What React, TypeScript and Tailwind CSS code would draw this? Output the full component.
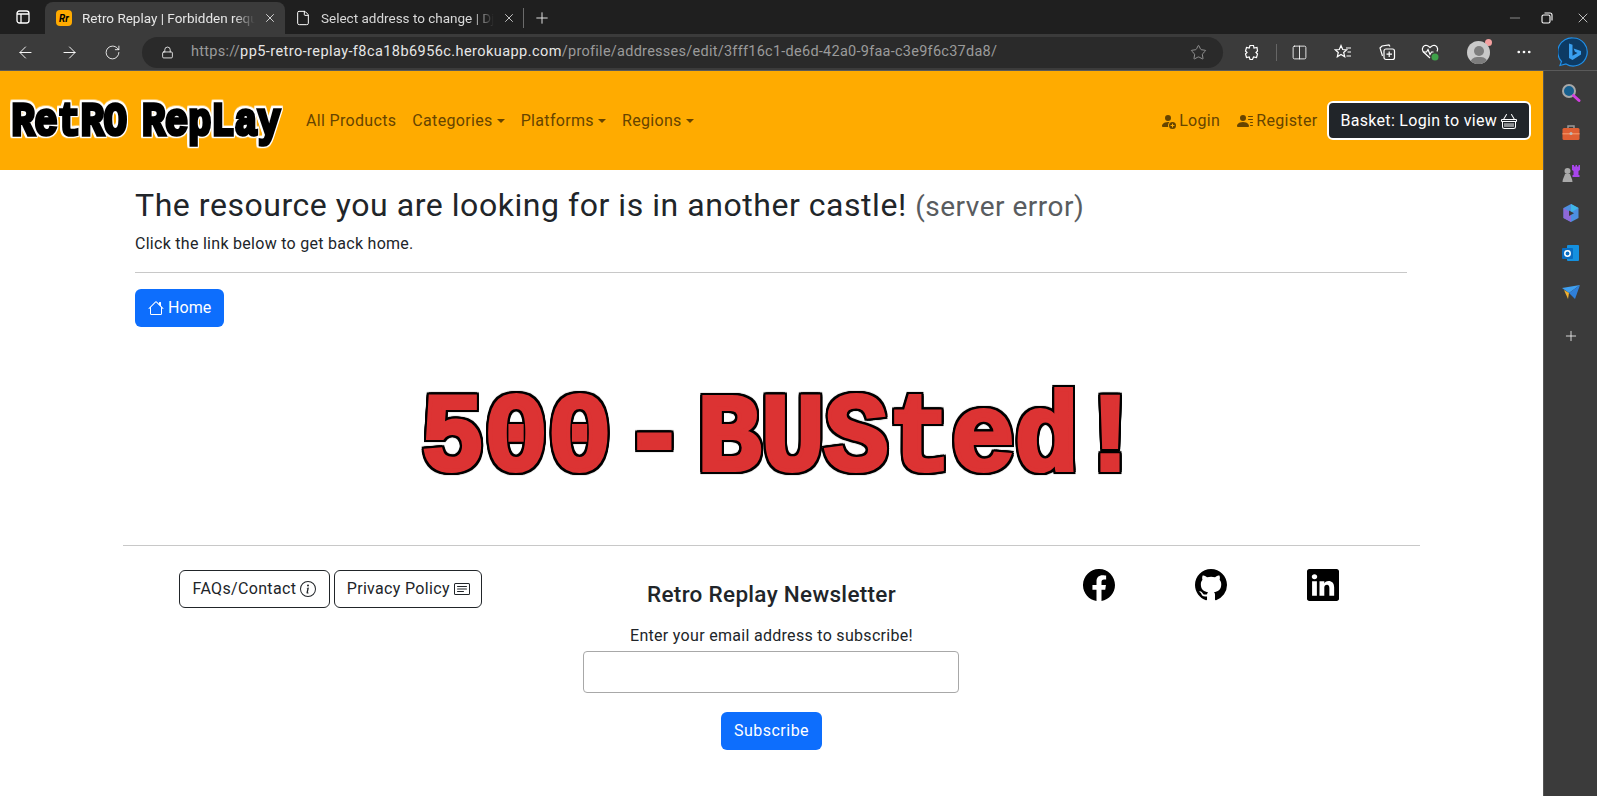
import React from 'react';
import { ArrowLeft, ArrowRight, RotateCw, Lock, Star, X, Plus, Minus, File, Columns2, MoreHorizontal } from 'lucide-react';
import { BsFacebook, BsGithub, BsLinkedin, BsHouse, BsInfoCircle, BsCardText, BsBasket, BsPersonFillAdd, BsPersonLinesFill } from 'react-icons/bs';

const body = "font-['Roboto','Liberation_Sans',sans-serif]";

function BrowserTabs() {
  return (
    <div className="h-[34px] bg-[#1f1f1f] flex items-end text-[#e6e6e6] text-[13.5px]">
      <div className="w-[45px] h-full flex items-center justify-center">
        <svg width="16" height="16" viewBox="0 0 16 16" fill="none" stroke="#fff" strokeWidth="1.3">
          <rect x="2" y="2" width="12" height="12" rx="2.5" />
          <path d="M2 5h12M6 5v9" />
        </svg>
      </div>
      <div className="w-[240px] h-[32px] bg-[#3b3b3b] rounded-t-lg flex items-center pl-[11px] pr-[8px] overflow-hidden">
        <span className="w-[16px] h-[16px] bg-[#ffab00] rounded-sm text-black text-[10px] italic font-bold flex items-center justify-center mr-[10px] shrink-0">Rr</span>
        <span className="flex-1 whitespace-nowrap overflow-hidden [mask-image:linear-gradient(90deg,#000_88%,transparent)]">Retro Replay | Forbidden requ</span>
        <X size={14} strokeWidth={1.5} className="ml-2 shrink-0" />
      </div>
      <div className="w-[238px] h-[32px] flex items-center pl-[10px] pr-[7px] overflow-hidden text-[#d8d8d8]">
        <File size={16} strokeWidth={1.5} className="mr-[10px] shrink-0 text-white" />
        <span className="flex-1 whitespace-nowrap overflow-hidden [mask-image:linear-gradient(90deg,#000_88%,transparent)]">Select address to change | Dja</span>
        <X size={14} strokeWidth={1.5} className="ml-2 shrink-0" />
      </div>
      <div className="h-[32px] flex items-center">
        <div className="w-px h-[20px] bg-[#6b6b6b]" />
        <Plus size={18} strokeWidth={1.3} className="ml-[9px]" />
      </div>
      <div className="ml-auto h-[32px] flex items-center gap-[18px] pr-[6px]">
        <Minus size={16} strokeWidth={1.3} className="text-[#9a9a9a]" />
        <svg width="12" height="12" viewBox="0 0 12 12" fill="none" stroke="#fff" strokeWidth="1.1">
          <rect x="1" y="3" width="8" height="8" rx="1.5" />
          <path d="M3.5 1h5.500a2 2 0 0 1 2 2v5.500" />
        </svg>
        <X size={16} strokeWidth={1.2} className="ml-[4px]" />
      </div>
    </div>
  );
}

function BrowserToolbar() {
  return (
    <div className="h-[37px] bg-[#3b3b3b] flex items-center text-white border-b border-[#5a5a5a]">
      <div className="w-[142px] flex items-center gap-[25px] pl-[16px] shrink-0">
        <ArrowLeft size={19} strokeWidth={1.2} />
        <ArrowRight size={19} strokeWidth={1.2} />
        <RotateCw size={17} strokeWidth={1.2} />
      </div>
      <div className="w-[1081px] h-[31px] rounded-full bg-[#2a2a2a] flex items-center pl-[19px] pr-[16px] shrink-0">
        <Lock size={13} strokeWidth={1.5} className="mr-[17px]" />
        <span className="text-[14.5px] tracking-[0.26px] text-[#9b9b9b] whitespace-nowrap">
          https://<span className="text-[#e6e6e6] tracking-[0.43px]">pp5-retro-replay-f8ca18b6956c.herokuapp.com</span>/profile/addresses/edit/3fff16c1-de6d-42a0-9faa-c3e9f6c37da8/
        </span>
        <Star size={17} strokeWidth={1.2} className="ml-auto text-[#a0a0a0]" />
      </div>
      <div className="flex-1 flex items-center pl-[20px] pr-[9px]">
        <svg width="18" height="18" viewBox="0 0 18 18" fill="none" stroke="#fff" strokeWidth="1.2">
          <path d="M7 2.500h3.500l.5 2.500 3-.5.5 3.500-1.500 1.500 1.500 1.500-1 3.500-3-.5-1 2.500H7l-.8-2.500-2.700.5L2.500 11l1.500-1.500L2.500 8l1-3.500 2.700.5z" />
        </svg>
        <div className="w-px h-[17px] bg-[#666] ml-[15px] mr-[14px]" />
        <Columns2 size={17} strokeWidth={1.2} />
        <svg width="18" height="18" viewBox="0 0 18 18" fill="none" stroke="#fff" strokeWidth="1.2" className="ml-[26px]">
          <path d="M7 2.500 8.700 6.500l4 .3-3 2.700 1 4.200L7 11.500l-3.700 2.200 1-4.200-3-2.700 4-.3z" />
          <path d="M12 5h5M13.500 9H17M12.500 13H17" />
        </svg>
        <svg width="18" height="18" viewBox="0 0 18 18" fill="none" stroke="#fff" strokeWidth="1.2" className="ml-[26px]">
          <rect x="6" y="6" width="10.500" height="10.500" rx="2" />
          <path d="M11.200 8.500v5.500M8.500 11.200h5.500M12 3.500l-1-1.500-7 1-2 2 2.500 8" />
        </svg>
        <svg width="20" height="20" viewBox="0 0 20 20" fill="none" className="ml-[24px]">
          <path d="M10 16 3 9.500C1 6 4 2.500 7 3.500 8.500 4 10 5.500 10 5.500S11.500 4 13 3.500c3-1 6 2.500 4 6" stroke="#fff" strokeWidth="1.200" />
          <path d="M3 10h3.500l1.500-2.500 2 5 1.500-2.500h2" stroke="#fff" strokeWidth="1.200" />
          <circle cx="15" cy="15" r="3.500" fill="#3fa14a" />
        </svg>
        <div className="relative w-[23px] h-[23px] rounded-full bg-[#c9c9c9] overflow-hidden ml-[27px] flex flex-col items-center justify-end">
          <div className="w-[10px] h-[10px] rounded-full bg-[#7d7d7d] mb-[1px]" />
          <div className="w-[18px] h-[7px] rounded-t-full bg-[#7d7d7d]" />
        </div>
        <span className="w-[7px] h-[7px] rounded-full bg-[#f4a0a0] -ml-[5px] -mt-[20px]" />
        <MoreHorizontal size={18} strokeWidth={1.6} className="ml-[23px]" />
        <svg width="30" height="30" viewBox="0 0 30 30" className="ml-auto">
          <path d="M15 1a14 14 0 1 1-7 26l-6 1.500 1.500-4A14 14 0 0 1 15 1z" fill="#0d3a63" stroke="#1f8fe8" strokeWidth="1.200" />
          <path d="M11 6.500l3.500 1.200v11l5-2.800-2.600-1.200-1.300-3.300 7.400 2.600v3.400L14.500 23 11 21z" fill="#3aa0f0" />
        </svg>
      </div>
    </div>
  );
}

function Navbar() {
  const linkClass = 'text-[#664400] text-[16px] tracking-[0.33px] whitespace-nowrap';
  return (
    <nav className="h-[99px] bg-[#ffab00] flex items-center pl-[10px] pr-[12px]">
      <div className="w-[272px] h-[50px] pt-[6px] flex items-center justify-center shrink-0">
        <span className="font-['Liberation_Mono',monospace] font-bold text-[38.5px] leading-none scale-y-[1.2] text-black whitespace-nowrap [word-spacing:-8px] [-webkit-text-stroke:3px_black] [filter:drop-shadow(1.5px_0_0_#fff)_drop-shadow(-1.5px_0_0_#fff)_drop-shadow(0_1.5px_0_#fff)_drop-shadow(0_-1.5px_0_#fff)]">
          RetRO RepLay
        </span>
      </div>
      <div className="flex items-center gap-[16px] ml-[24px]">
        <span className={linkClass}>All Products</span>
        {['Categories', 'Platforms', 'Regions'].map(label => (
          <span key={label} className={`${linkClass} flex items-center`}>
            {label}
            <span className="ml-[4px] border-t-[4px] border-x-[4px] border-x-transparent border-t-[#664400]" />
          </span>
        ))}
      </div>
      <div className="ml-auto flex items-center">
        <span className={`${linkClass} flex items-center gap-[3px]`}><BsPersonFillAdd size={16} /> Login</span>
        <span className={`${linkClass} flex items-center gap-[3px] ml-[17px]`}><BsPersonLinesFill size={16} /> Register</span>
        <span className="ml-[9px] h-[39px] px-[12px] flex items-center gap-[4px] bg-[#212529] text-white text-[16px] tracking-[0.3px] rounded-md border-2 border-white whitespace-nowrap">
          Basket: Login to view <BsBasket size={16} />
        </span>
      </div>
    </nav>
  );
}

function Sidebar() {
  return (
    <aside className="w-[54px] shrink-0 bg-[#3b3b3b] border-l border-[#555] flex flex-col items-center pt-[12px] gap-[20px] text-white">
      <svg width="20" height="20" viewBox="0 0 20 20"><circle cx="8" cy="8" r="6" fill="#17608f" stroke="#a8a8a8" strokeWidth="2" /><path d="M12.500 12.500 18 17.500" stroke="#d13fe0" strokeWidth="3" strokeLinecap="round" /></svg>
      <svg width="20" height="20" viewBox="0 0 20 20"><path d="M7 5V3h6v2" stroke="#999" strokeWidth="1.500" fill="none" /><rect x="1.500" y="5" width="17" height="12" rx="1.500" fill="#df5f33" /><rect x="1.500" y="10" width="17" height="1.500" fill="#f08a5c" /><circle cx="10" cy="10.500" r="1.500" fill="#bbb" /></svg>
      <svg width="20" height="20" viewBox="0 0 20 20"><circle cx="6.500" cy="8" r="3" fill="#a9a9a9" /><path d="M1.500 19c0-3 2-6 2.500-8h5c.5 2 2.500 5 2.500 8z" fill="#a9a9a9" /><path d="M11 2h2v1.500h1.500V2h1.500v1.500h1.500V2H19v5l-1.500 1v4h1v2h-7v-2h1V8L11 7z" fill="#a846ec" /></svg>
      <svg width="20" height="20" viewBox="0 0 20 20"><path d="M10 1 17.500 5v10L10 19l-7.500-4V5z" fill="#4d8fe0" /><path d="M2.500 5 10 9.500V19l-7.500-4z" fill="#8f68d8" /><path d="M10 1l7.500 4-7.500 4.500z" fill="#3fb6e8" /><path d="M8 7.500l5 2.800-5 2.700z" fill="#3b3b3b" /></svg>
      <svg width="20" height="20" viewBox="0 0 20 20"><rect x="6" y="2" width="12" height="16" rx="1" fill="#1490df" /><rect x="1" y="5" width="11" height="11" rx="1" fill="#0a6cc0" /><circle cx="6.500" cy="10.500" r="2.700" fill="none" stroke="#fff" strokeWidth="1.500" /></svg>
      <svg width="20" height="20" viewBox="0 0 20 20"><path d="M1 5 19 2 8 10z" fill="#3fa0f0" /><path d="M8 10 19 2l-5 14z" fill="#2f7fd8" /><path d="M3 7l5 3-1 6z" fill="#f0b030" /></svg>
      <Plus size={16} strokeWidth={1.2} className="mt-[5px]" />
    </aside>
  );
}

function ErrorContent() {
  return (
    <div className="mx-[135px] w-[1272px] pt-[16px]">
      <h1 className="text-[#212529] text-[32px] leading-[38px] tracking-[0.545px] whitespace-nowrap">
        The resource you are looking for is in another castle! <small className="text-[#595c5f] text-[28px] tracking-[0.5px]">(server error)</small>
      </h1>
      <p className="text-[#212529] text-[16px] leading-[24px] tracking-[0.28px] mt-[6px]">Click the link below to get back home.</p>
      <hr className="border-[#c8c8c8] mt-[16px]" />
      <button className="mt-[16px] h-[38px] px-[13px] bg-[#0d6efd] text-white text-[16px] tracking-[0.1px] rounded-md flex items-center gap-[4px]">
        <BsHouse size={16} /> Home
      </button>
      <div className="h-[218px] pt-[8px] pl-[20px] flex items-center justify-center">
        <span className="font-['Liberation_Mono',monospace] font-bold text-[107px] leading-none scale-y-[1.04] text-[#dc3333] whitespace-nowrap tracking-[-0.75px] [word-spacing:-52px] [-webkit-text-stroke:4px_#dc3333] [filter:drop-shadow(2px_0_0_#000)_drop-shadow(-2px_0_0_#000)_drop-shadow(0_2px_0_#000)_drop-shadow(0_-2px_0_#000)]">
          500 - BUSted!
        </span>
      </div>
    </div>
  );
}

function Footer() {
  const outlineClass = 'h-[38px] border border-[#212529] rounded-md text-[#212529] text-[16px] tracking-[0.33px] flex items-center gap-[4px] whitespace-nowrap';
  return (
    <footer className="mx-[123px] w-[1297px] border-t border-[#c8c8c8] grid grid-cols-3 text-[#212529]">
      <div className="flex justify-end gap-[4px] pt-[24px] pr-[73px] items-start">
        <button className={`${outlineClass} px-[13px]`}>FAQs/Contact <BsInfoCircle size={16} /></button>
        <button className={`${outlineClass} px-[11.5px]`}>Privacy Policy <BsCardText size={16} /></button>
      </div>
      <div className="flex flex-col items-center pt-[36px]">
        <h2 className="text-[22.5px] leading-[24px] font-medium tracking-[0.3px]">Retro Replay Newsletter</h2>
        <p className="text-[16px] leading-[24px] tracking-[0.3px] mt-[18px]">Enter your email address to subscribe!</p>
        <input aria-label="Email" className="w-[376px] h-[42px] mt-[3px] border border-[#a8a8a8] rounded-[4px] bg-white" />
        <button className="mt-[19px] h-[38px] px-[13px] bg-[#0d6efd] text-white text-[16px] tracking-[0.5px] rounded-md">Subscribe</button>
      </div>
      <div className="flex pl-[95px] pt-[23px] gap-[80px] items-start text-black">
        <BsFacebook size={32} />
        <BsGithub size={32} />
        <BsLinkedin size={32} />
      </div>
    </footer>
  );
}

export default function App() {
  return (
    <div className={`${body} w-[1597px] h-[796px] overflow-hidden flex flex-col bg-white`}>
      <BrowserTabs />
      <BrowserToolbar />
      <div className="flex-1 flex min-h-0">
        <main className="flex-1 min-w-0">
          <Navbar />
          <ErrorContent />
          <Footer />
        </main>
        <Sidebar />
      </div>
    </div>
  );
}
